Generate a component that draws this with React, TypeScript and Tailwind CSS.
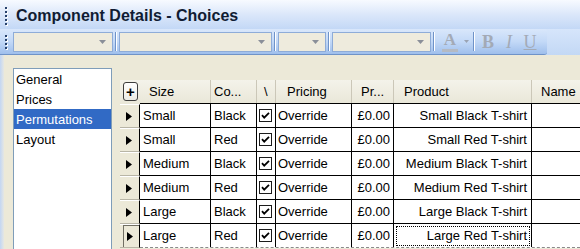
import React from 'react';

const rows = [
  ['Small', 'Black', 'Small Black T-shirt'],
  ['Small', 'Red', 'Small Red T-shirt'],
  ['Medium', 'Black', 'Medium Black T-shirt'],
  ['Medium', 'Red', 'Medium Red T-shirt'],
  ['Large', 'Black', 'Large Black T-shirt'],
  ['Large', 'Red', 'Large Red T-shirt'],
];

function Gripper({ count }: { count: number }) {
  return (
    <div className="flex flex-col gap-[2px]">
      {Array.from({ length: count }).map((_, i) => (
        <div key={i} className="w-[2px] h-[2px] bg-[#27416b] shadow-[1px_1px_0_#ffffff]" />
      ))}
    </div>
  );
}

function Combo({ w }: { w: string }) {
  return (
    <div className={`${w} h-[20px] bg-[#eeebdd] border border-[#8eacd8] flex items-center justify-end pr-[6px]`}>
      <svg width="7" height="4" viewBox="0 0 7 4">
        <polygon points="0,0 7,0 3.5,4" fill="#8a8f99" />
      </svg>
    </div>
  );
}

function Sep() {
  return (
    <div className="flex h-[19px] mx-[2px]">
      <div className="w-[1px] bg-[#6f93c8]" />
      <div className="w-[1px] bg-white" />
    </div>
  );
}

function Check() {
  return (
    <svg width="13" height="13" viewBox="0 0 13 13">
      <rect x="0.5" y="0.5" width="12" height="12" fill="#ffffff" stroke="#1c1c1c" />
      <path d="M3 6.2 L5.2 8.6 L10 3.8" fill="none" stroke="#000000" strokeWidth="1.8" />
    </svg>
  );
}

function Arrow() {
  return (
    <svg width="6" height="9" viewBox="0 0 6 9">
      <polygon points="0,0 6,4.5 0,9" fill="#000000" />
    </svg>
  );
}

export default function App() {
  return (
    <div className="w-[580px] h-[249px] overflow-hidden flex flex-col bg-[#ece9d8] text-[13px] text-black font-['Liberation_Sans',Arial,sans-serif]">
      {/* title bar */}
      <div className="h-[29px] shrink-0 flex items-center bg-gradient-to-b from-[#f7faff] via-[#dbe7fa] to-[#c3d8f6] pt-[3px]">
        <div className="ml-[5px]">
          <Gripper count={5} />
        </div>
        <div className="ml-[9px] text-[16px] font-bold text-[#101c33] leading-none">Component Details - Choices</div>
      </div>

      {/* toolbar */}
      <div className="h-[26px] shrink-0 flex bg-gradient-to-b from-[#d6e5fb] to-[#c3d8f5]">
        <div className="w-[547px] h-full flex items-center rounded-r-[3px] bg-gradient-to-b from-[#d9e7fb] via-[#c3d9f7] to-[#9fbfec] border-b border-[#6f93c8]">
          <div className="ml-[5px] mr-[6px]">
            <Gripper count={4} />
          </div>
          <Combo w="w-[100px]" />
          <Sep />
          <Combo w="w-[153px]" />
          <Sep />
          <Combo w="w-[48px]" />
          <Sep />
          <Combo w="w-[99px]" />
          <Sep />
          <div className="flex flex-col items-center ml-[4px] w-[18px] font-['Liberation_Serif',serif] font-bold text-[17px] leading-none text-[#a3aab6]">
            <span>A</span>
            <div className="w-[16px] h-[3px] bg-[#b4bac4] mt-[1px]" />
          </div>
          <svg width="5" height="3" viewBox="0 0 5 3" className="ml-[5px]">
            <polygon points="0,0 5,0 2.5,3" fill="#9aa3b3" />
          </svg>
          <div className="ml-[2px]">
            <Sep />
          </div>
          <div className="ml-[2px] w-[18px] text-center font-['Liberation_Serif',serif] font-bold text-[18px] text-[#a3aab6] leading-none">B</div>
          <div className="ml-[3px] w-[18px] text-center font-['Liberation_Serif',serif] italic text-[18px] text-[#a3aab6] leading-none">I</div>
          <div className="ml-[3px] w-[18px] text-center font-['Liberation_Serif',serif] underline text-[18px] text-[#a3aab6] leading-none">U</div>
        </div>
      </div>

      {/* content */}
      <div className="flex flex-1 min-h-0">
        <div className="w-[4px] bg-gradient-to-r from-[#c2d6f3] to-[#e6e7e2]" />

        {/* list box */}
        <div className="ml-[9px] mt-[13px] w-[99px] bg-white border border-[#7f9db9] border-b-0">
          {['General', 'Prices', 'Permutations', 'Layout'].map((t) => (
            <div
              key={t}
              className={`h-[20px] leading-[21px] pl-[2px] ${t === 'Permutations' ? 'bg-[#316ac5] text-white' : ''}`}
            >
              {t}
            </div>
          ))}
        </div>

        {/* grid */}
        <div className="ml-[8px] mt-[25px] flex-1 min-w-0 flex flex-col">
          {/* header */}
          <div className="flex h-[24px] bg-gradient-to-b from-[#f4f3ea] to-[#e9e7d8]">
            <div className="w-[20px] shrink-0 pl-[3px] pt-[2px]">
              <div className="w-[15px] h-[19px] rounded-[3px] border border-[#3d3d3d] bg-gradient-to-b from-white to-[#ecebe4] flex items-center justify-center font-bold text-[15px] leading-none">
                +
              </div>
            </div>
            <div className="flex flex-1 border-b border-black">
              <div className="w-[71px] shrink-0 border-r border-[#cbc7b8] pl-[9px] flex items-center">Size</div>
              <div className="w-[46px] shrink-0 border-r border-[#cbc7b8] pl-[3px] flex items-center">Co...</div>
              <div className="w-[19px] shrink-0 border-r border-[#cbc7b8] pl-[7px] flex items-center">\</div>
              <div className="w-[76px] shrink-0 border-r border-[#cbc7b8] pl-[11px] flex items-center">Pricing</div>
              <div className="w-[42px] shrink-0 border-r border-[#cbc7b8] pl-[9px] flex items-center">Pr...</div>
              <div className="w-[138px] shrink-0 border-r border-[#cbc7b8] pl-[10px] flex items-center">Product</div>
              <div className="flex-1 pl-[9px] flex items-center whitespace-nowrap">Name</div>
            </div>
          </div>

          {/* rows */}
          {rows.map(([size, colour, product], i) => {
            const last = i === rows.length - 1;
            const line = last ? 'border-b border-dashed border-b-[#8a8a8a]' : 'border-b border-black';
            return (
              <div key={i} className="flex h-[24px]">
                <div className="w-[20px] shrink-0 border-r border-black bg-[#ece9d8] border-b border-b-[#b8b5a6] border-t border-t-white">
                  {last ? (
                    <div className="h-full ml-[3px] border-l border-t border-[#716f64] flex items-center pl-[3px]">
                      <Arrow />
                    </div>
                  ) : (
                    <div className="h-full flex items-center pl-[6px]">
                      <Arrow />
                    </div>
                  )}
                </div>
                <div className={`flex flex-1 bg-white ${line}`}>
                  <div className="w-[71px] shrink-0 border-r border-black pl-[3px] flex items-center">{size}</div>
                  <div className="w-[46px] shrink-0 border-r border-black pl-[3px] flex items-center">{colour}</div>
                  <div className="w-[19px] shrink-0 border-r border-black pl-[2px] flex items-center">
                    <Check />
                  </div>
                  <div className="w-[76px] shrink-0 border-r border-black pl-[2px] flex items-center">Override</div>
                  <div className="w-[42px] shrink-0 border-r border-black pr-[3px] flex items-center justify-end">£0.00</div>
                  <div className="w-[138px] shrink-0 border-r border-black pr-[4px] flex items-center justify-end relative">
                    {last && <div className="absolute top-[2px] left-[2px] right-[1px] bottom-[1px] border border-dotted border-black" />}
                    <span className="relative">{product}</span>
                  </div>
                  <div className="flex-1" />
                </div>
              </div>
            );
          })}
        </div>
      </div>
    </div>
  );
}
